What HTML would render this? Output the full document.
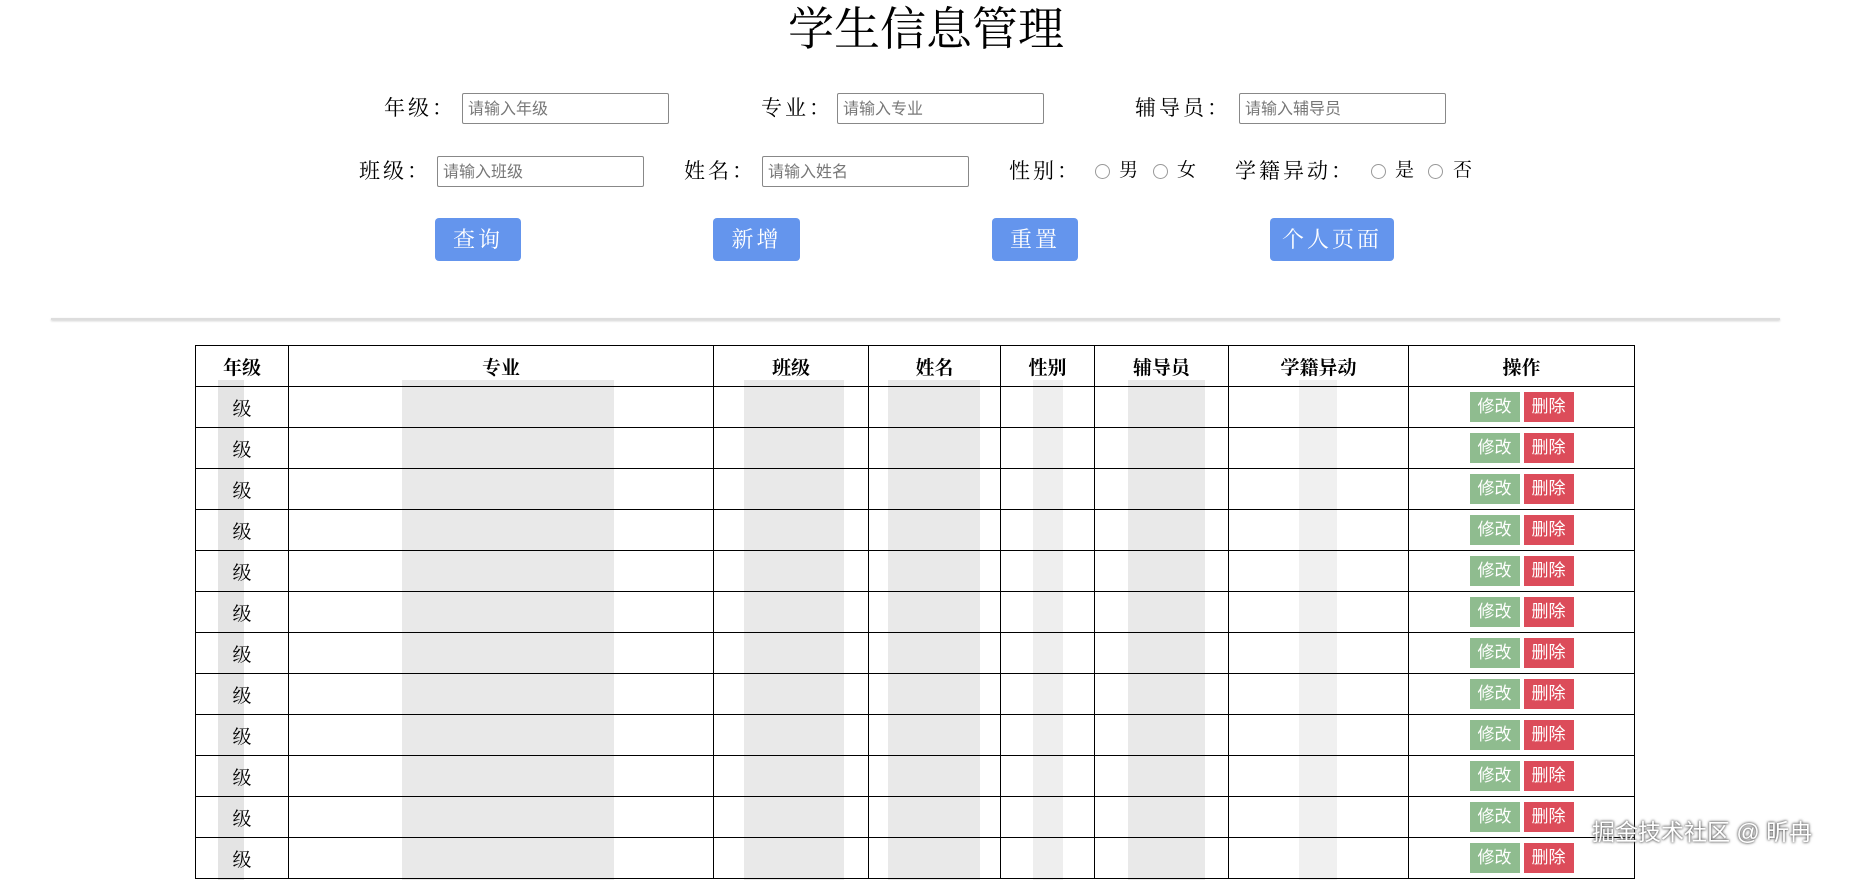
<!DOCTYPE html>
<html><head><meta charset="utf-8"><style>
body{margin:0;width:1852px;height:867px;overflow:hidden;background:#fff;position:relative;font-family:"Liberation Serif","Noto Serif CJK SC",serif;color:#000}
.a{position:absolute}
.t{left:0;width:1852px;top:2px;text-align:center;font-size:46px;line-height:56px}
.l{font-size:21px;line-height:30px;letter-spacing:3px}
.i{width:207px;border:1px solid #888;border-radius:2px;font-family:"Liberation Sans","Noto Sans CJK SC",sans-serif;font-size:16px;color:#777;line-height:31px;padding-left:5px;box-sizing:border-box;height:31px}
.r{width:15px;height:15px;border:1px solid #999;border-radius:50%;box-sizing:border-box}
.b{background:#6495ed;color:#fff;border-radius:4px;height:43px;font-size:22px;line-height:43px;text-align:center;letter-spacing:3px}
.hr{left:51px;width:1729px;top:318px;height:2px;background:#ddd;box-shadow:0 1px 2px #ccc}
table{position:absolute;left:195px;top:345px;border-collapse:collapse;width:1440px;z-index:2}
td,th{border:1px solid #000;height:40px;padding:0;text-align:center;font-size:19px}
th{font-weight:bold}
.g,.d{display:inline-block;width:50px;height:30px;line-height:30px;color:#fff;font-size:17px;font-family:"Liberation Sans","Noto Sans CJK SC",sans-serif;vertical-align:middle}
.g{background:#8fbc8f;margin-right:4px}.d{background:#dc4c5a}
.bl{background:#e9e9e9;top:380px;height:500px;z-index:1}
.wm{left:1592px;top:813px;font-size:23px;color:#fff;text-shadow:0 0 3px #666,0 0 2px #444;font-family:"Liberation Sans","Noto Sans CJK SC",sans-serif;z-index:3}
</style></head><body>
<div class="a t">学生信息管理</div>
<div class="a l" style="left:384px;top:93px">年级：</div><div class="a i" style="left:462px;top:93px">请输入年级</div>
<div class="a l" style="left:761px;top:93px">专业：</div><div class="a i" style="left:837px;top:93px">请输入专业</div>
<div class="a l" style="left:1135px;top:93px">辅导员：</div><div class="a i" style="left:1239px;top:93px">请输入辅导员</div>
<div class="a l" style="left:359px;top:156px">班级：</div><div class="a i" style="left:437px;top:156px">请输入班级</div>
<div class="a l" style="left:684px;top:156px">姓名：</div><div class="a i" style="left:762px;top:156px">请输入姓名</div>
<div class="a l" style="left:1009px;top:156px">性别：</div>
<div class="a r" style="left:1095px;top:164px"></div><div class="a l" style="left:1119px;top:156px;font-size:19px">男</div>
<div class="a r" style="left:1153px;top:164px"></div><div class="a l" style="left:1177px;top:156px;font-size:19px">女</div>
<div class="a l" style="left:1235px;top:156px">学籍异动：</div>
<div class="a r" style="left:1371px;top:164px"></div><div class="a l" style="left:1395px;top:156px;font-size:19px">是</div>
<div class="a r" style="left:1428px;top:164px"></div><div class="a l" style="left:1453px;top:156px;font-size:19px">否</div>
<div class="a b" style="left:435px;top:218px;width:86px">查询</div>
<div class="a b" style="left:713px;top:218px;width:87px">新增</div>
<div class="a b" style="left:992px;top:218px;width:86px">重置</div>
<div class="a b" style="left:1270px;top:218px;width:124px">个人页面</div>
<div class="a hr"></div>
<table>
<tr><th style="width:92px">年级</th><th style="width:424px">专业</th><th style="width:154px">班级</th><th style="width:131px">姓名</th><th style="width:93px">性别</th><th style="width:133px">辅导员</th><th style="width:179px">学籍异动</th><th>操作</th></tr>
<tr><td>级</td><td></td><td></td><td></td><td></td><td></td><td></td><td><span class="g">修改</span><span class="d">删除</span></td></tr>
<tr><td>级</td><td></td><td></td><td></td><td></td><td></td><td></td><td><span class="g">修改</span><span class="d">删除</span></td></tr>
<tr><td>级</td><td></td><td></td><td></td><td></td><td></td><td></td><td><span class="g">修改</span><span class="d">删除</span></td></tr>
<tr><td>级</td><td></td><td></td><td></td><td></td><td></td><td></td><td><span class="g">修改</span><span class="d">删除</span></td></tr>
<tr><td>级</td><td></td><td></td><td></td><td></td><td></td><td></td><td><span class="g">修改</span><span class="d">删除</span></td></tr>
<tr><td>级</td><td></td><td></td><td></td><td></td><td></td><td></td><td><span class="g">修改</span><span class="d">删除</span></td></tr>
<tr><td>级</td><td></td><td></td><td></td><td></td><td></td><td></td><td><span class="g">修改</span><span class="d">删除</span></td></tr>
<tr><td>级</td><td></td><td></td><td></td><td></td><td></td><td></td><td><span class="g">修改</span><span class="d">删除</span></td></tr>
<tr><td>级</td><td></td><td></td><td></td><td></td><td></td><td></td><td><span class="g">修改</span><span class="d">删除</span></td></tr>
<tr><td>级</td><td></td><td></td><td></td><td></td><td></td><td></td><td><span class="g">修改</span><span class="d">删除</span></td></tr>
<tr><td>级</td><td></td><td></td><td></td><td></td><td></td><td></td><td><span class="g">修改</span><span class="d">删除</span></td></tr>
<tr><td>级</td><td></td><td></td><td></td><td></td><td></td><td></td><td><span class="g">修改</span><span class="d">删除</span></td></tr>
</table>
<div class="a bl" style="left:218px;width:26px;background:#e4e4e4"></div>
<div class="a bl" style="left:402px;width:212px"></div>
<div class="a bl" style="left:744px;width:100px"></div>
<div class="a bl" style="left:888px;width:92px"></div>
<div class="a bl" style="left:1033px;width:30px;background:#eee"></div>
<div class="a bl" style="left:1128px;width:77px"></div>
<div class="a bl" style="left:1299px;width:38px;background:#f0f0f0"></div>
<div class="a wm">掘金技术社区 @ 昕冉</div>
</body></html>
